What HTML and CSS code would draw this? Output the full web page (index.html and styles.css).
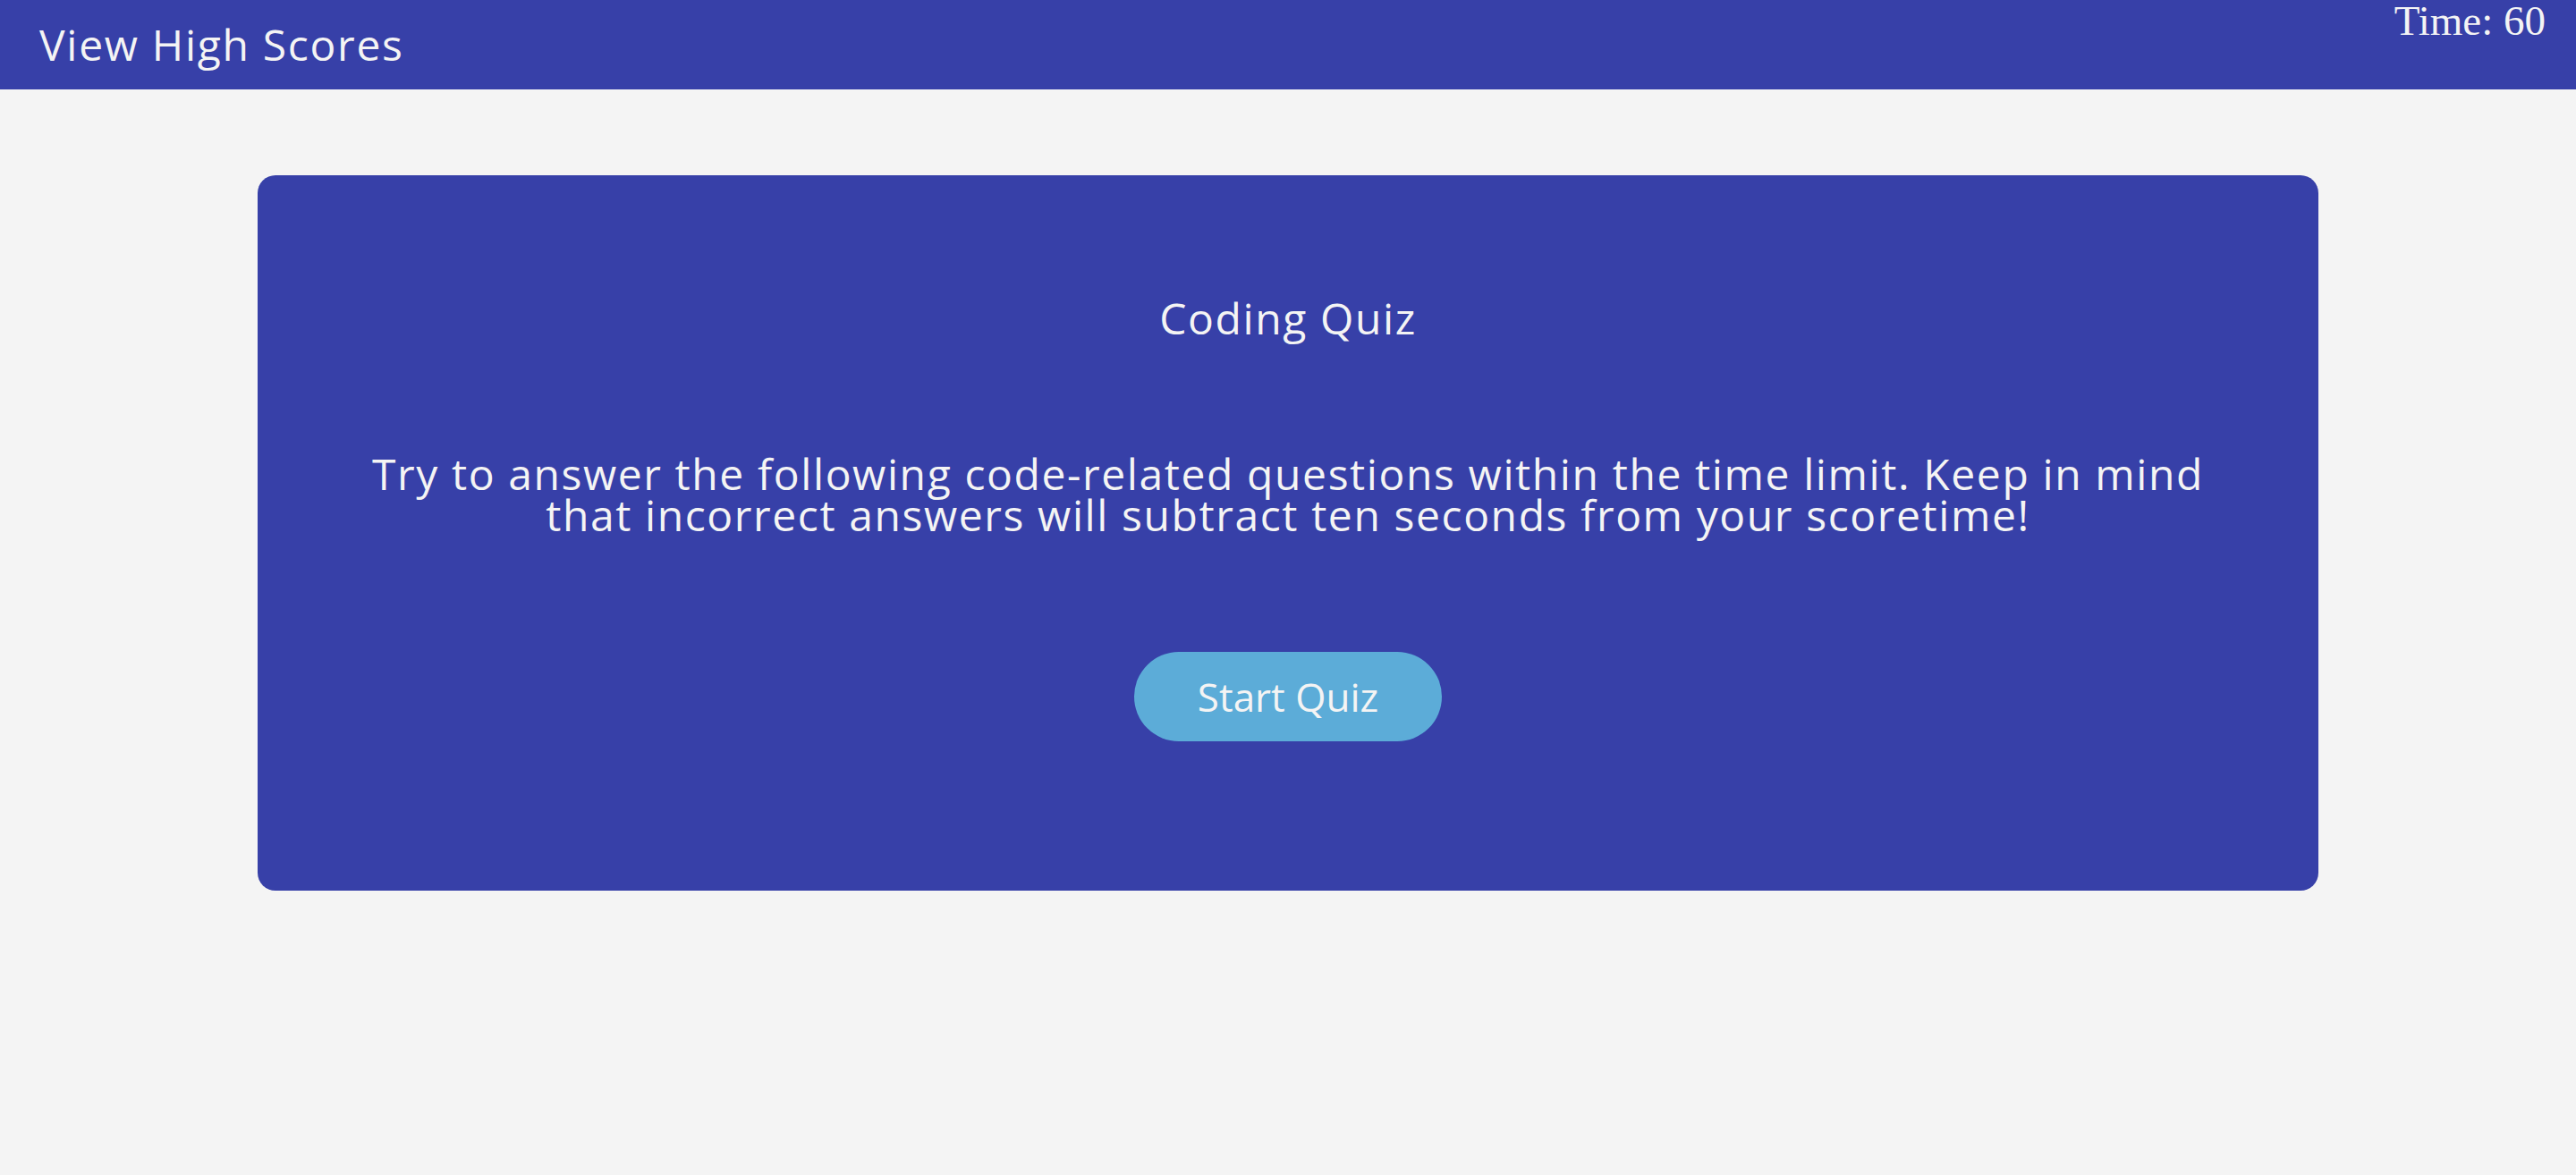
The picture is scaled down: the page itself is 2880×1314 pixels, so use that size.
FILE: index.html
```html
<!DOCTYPE html>
<html lang="en">
<head>
<meta charset="utf-8">
<title>Coding Quiz</title>
<link rel="stylesheet" href="styles.css">
</head>
<body>
<header class="topbar">
  <a class="scores-link" href="#">View High Scores</a>
  <div class="timer">Time: 60</div>
</header>
<main class="page">
  <section class="card">
    <h1 class="card-title">Coding Quiz</h1>
    <p class="card-text">Try to answer the following code-related questions within the time limit. Keep in mind that incorrect answers will subtract ten seconds from your scoretime!</p>
    <button class="start-btn" type="button">Start Quiz</button>
  </section>
</main>
</body>
</html>
```
FILE: styles.css
```css
* { box-sizing: border-box; }
html, body {
  margin: 0;
  padding: 0;
  background: #f4f4f4;
  font-family: "Open Sans", sans-serif;
  color: #f4f4f4;
}
.topbar {
  position: relative;
  height: 100px;
  background: #3740a8;
  display: flex;
  align-items: center;
  padding-left: 44px;
}
.scores-link {
  color: #f4f4f4;
  text-decoration: none;
  font-size: 48px;
  line-height: 1;
  letter-spacing: 1.7px;
}
.timer {
  position: absolute;
  top: 0;
  right: 34px;
  font-family: "Liberation Serif", serif;
  font-size: 47px;
  line-height: 1;
}
.page {
  padding-top: 96px;
}
.card {
  width: 2304px;
  height: 800px;
  margin: 0 auto;
  background: #3740a8;
  border-radius: 20px;
  display: flex;
  flex-direction: column;
  align-items: center;
  padding-top: 130px;
}
.card-title {
  margin: 0;
  font-weight: 400;
  font-size: 48px;
  line-height: 60px;
  letter-spacing: 1.6px;
}
.card-text {
  margin: 121px 0 0;
  width: 2100px;
  text-align: center;
  font-size: 48px;
  line-height: 46px;
  letter-spacing: 1.6px;
}
.start-btn {
  margin-top: 130px;
  width: 344px;
  height: 100px;
  border: none;
  border-radius: 50px;
  background: #5cacd8;
  color: #f4f4f4;
  font-family: inherit;
  font-size: 44px;
}
```
